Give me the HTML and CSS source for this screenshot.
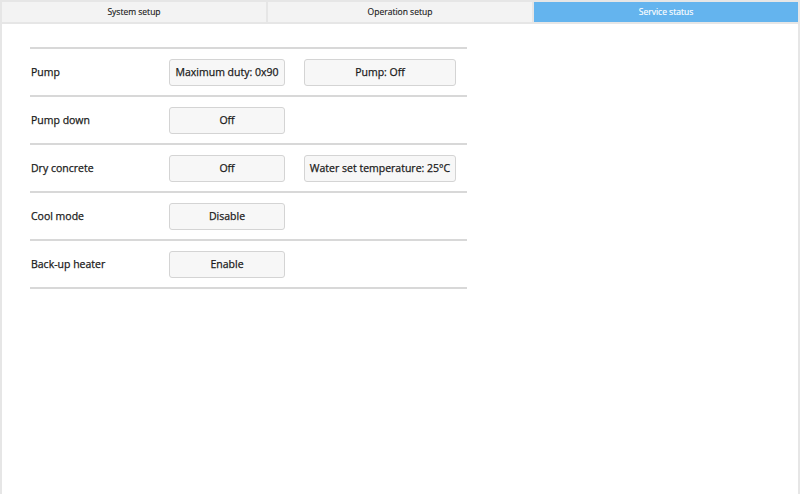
FILE: index.html
```html
<!DOCTYPE html>
<html lang="en">
<head>
    <meta charset="UTF-8">
    <meta name="viewport" content="width=device-width, initial-scale=1.0">
    <title>Service status</title>
    <link rel="stylesheet" href="styles.css">
</head>
<body>
    <div class="frame">
        <!-- Tab bar -->
        <div class="tabs">
            <div class="tab">System setup</div>
            <div class="tab">Operation setup</div>
            <div class="tab active">Service status</div>
        </div>

        <!-- Service status list -->
        <div class="content">
            <div class="status-list">
                <div class="row">
                    <div class="label">Pump</div>
                    <button class="btn">Maximum duty: 0x90</button>
                    <button class="btn wide">Pump: Off</button>
                </div>
                <div class="row">
                    <div class="label">Pump down</div>
                    <button class="btn">Off</button>
                </div>
                <div class="row">
                    <div class="label">Dry concrete</div>
                    <button class="btn">Off</button>
                    <button class="btn wide">Water set temperature: 25°C</button>
                </div>
                <div class="row">
                    <div class="label">Cool mode</div>
                    <button class="btn">Disable</button>
                </div>
                <div class="row">
                    <div class="label">Back-up heater</div>
                    <button class="btn">Enable</button>
                </div>
            </div>
        </div>
    </div>
</body>
</html>
```

FILE: styles.css
```css
html, body {
    margin: 0;
    padding: 0;
    height: 100%;
}

body {
    font-family: "Open Sans", "Noto Sans", sans-serif;
    color: #1a1a1a;
    background: #fff;
}

.frame {
    box-sizing: border-box;
    height: 100%;
    border: 2px solid #e6e6e6;
    border-bottom: none;
    display: flex;
    flex-direction: column;
}

.tabs {
    display: flex;
    gap: 2px;
    background: #e6e6e6;
    padding-bottom: 2px;
}

.tab {
    flex: 1;
    height: 20px;
    line-height: 20px;
    text-align: center;
    font-size: 8.5px;
    background: #f3f3f3;
    color: #1a1a1a;
    -webkit-text-stroke: 0.15px currentColor;
}

.tab.active {
    background: #64b4ee;
    color: #fff;
}

.content {
    padding: 23px 0 0 28px;
}

.status-list {
    width: 437px;
    border-top: 2px solid #d8d8d8;
}

.row {
    display: flex;
    align-items: center;
    height: 46px;
    border-bottom: 2px solid #d8d8d8;
}

.label,
.btn {
    -webkit-text-stroke: 0.25px currentColor;
}

.label {
    flex-shrink: 0;
    width: 138px;
    padding-left: 1px;
    font-size: 10.5px;
}

.btn {
    flex-shrink: 0;
    box-sizing: border-box;
    width: 116px;
    height: 27px;
    margin-right: 19px;
    padding: 0;
    white-space: nowrap;
    font-family: inherit;
    font-size: 10.5px;
    color: #1a1a1a;
    background: #f7f7f7;
    border: 1px solid #d4d4d4;
    border-radius: 3px;
}

.btn.wide {
    width: 152px;
}
```
